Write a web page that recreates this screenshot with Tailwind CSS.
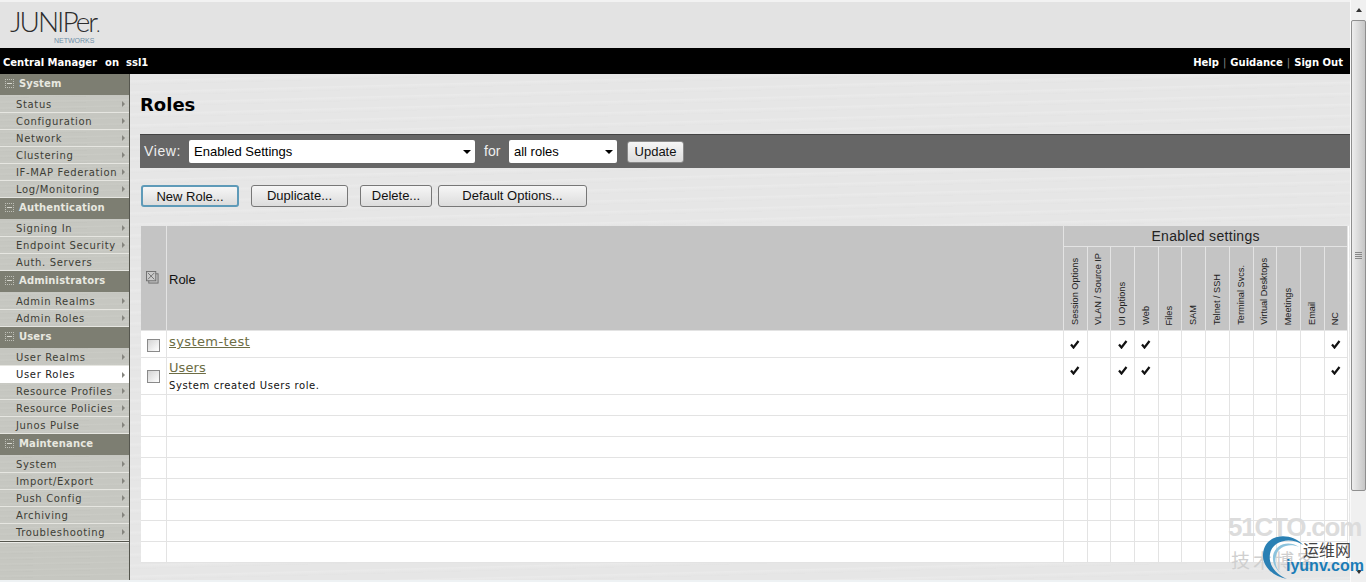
<!doctype html>
<html><head><meta charset="utf-8"><script src="https://cdn.jsdelivr.net/npm/@tailwindcss/browser@4"></script></head>
<body class="w-[1366px] h-[582px] overflow-hidden bg-[#e8ecee] font-['DejaVu_Sans',sans-serif] relative">
<div class="flex h-[582px]">
<div class="w-[1350px] flex flex-col">
  <header class="h-[48px] shrink-0 bg-[#e3e3e3] border-t-2 border-[#f2f2f2] pl-[10px] pt-[7px] flex flex-col items-start">
    <div class="font-['Lato',sans-serif] font-light text-[28px] leading-[24px] text-[#2c2c2c] tracking-[-2px]">JUNIPer<span class="text-[17px]">.</span></div>
    <div class="font-['Liberation_Sans',sans-serif] text-[7px] leading-[8px] ml-[44px] -mt-px text-[#6f8fa8]">NETWORKS</div>
  </header>
  <div class="h-[26px] shrink-0 bg-black text-white text-[10px] font-bold flex items-center justify-between pl-[3px] pr-[7px] pt-[2px]">
    <span class="whitespace-pre">Central Manager  <span class="ml-px">on</span>  <span>ssl1</span></span>
    <span class="flex items-center"><span>Help</span><span class="font-normal text-[#888] mx-[4px]">|</span><span>Guidance</span><span class="font-normal text-[#888] mx-[4px]">|</span><span>Sign Out</span></span>
  </div>
  <div class="flex flex-1 min-h-0">
    <nav class="w-[130px] shrink-0 border-r border-[#55564e] bg-[repeating-linear-gradient(179deg,#c6c7c1_0px,#c6c7c1_3px,#cacbc5_4px,#c3c4be_6px)] text-[10px] tracking-[0.65px] text-[#3d3d35]">
      <div class="h-[21px] mb-px bg-[#7d7e72] text-[#e8e8e0] font-bold tracking-[0.15px] flex items-center pl-[5px] pb-[2px]"><span class="w-[9px] h-[9px] border border-dotted border-[#bfc0b8] mr-[5px] flex items-center justify-center"><span class="w-[5px] h-px bg-[#d8d8d0]"></span></span>System</div>
      <a class="h-[17px] flex items-center justify-between pl-[16px] pr-[4px] border-b border-[#e6e6e1]">Status<span class="w-0 h-0 border-y-[3px] border-y-transparent border-l-[3px] border-l-[#85857f]"></span></a>
      <a class="h-[17px] flex items-center justify-between pl-[16px] pr-[4px] border-b border-[#e6e6e1]">Configuration<span class="w-0 h-0 border-y-[3px] border-y-transparent border-l-[3px] border-l-[#85857f]"></span></a>
      <a class="h-[17px] flex items-center justify-between pl-[16px] pr-[4px] border-b border-[#e6e6e1]">Network<span class="w-0 h-0 border-y-[3px] border-y-transparent border-l-[3px] border-l-[#85857f]"></span></a>
      <a class="h-[17px] flex items-center justify-between pl-[16px] pr-[4px] border-b border-[#e6e6e1]">Clustering<span class="w-0 h-0 border-y-[3px] border-y-transparent border-l-[3px] border-l-[#85857f]"></span></a>
      <a class="h-[17px] flex items-center justify-between pl-[16px] pr-[4px] border-b border-[#e6e6e1]">IF-MAP Federation<span class="w-0 h-0 border-y-[3px] border-y-transparent border-l-[3px] border-l-[#85857f]"></span></a>
      <a class="h-[17px] flex items-center justify-between pl-[16px] pr-[4px] border-b border-[#e6e6e1]">Log/Monitoring<span class="w-0 h-0 border-y-[3px] border-y-transparent border-l-[3px] border-l-[#85857f]"></span></a>

      <div class="h-[21px] mb-px bg-[#7d7e72] text-[#e8e8e0] font-bold tracking-[0.15px] flex items-center pl-[5px] pb-[2px]"><span class="w-[9px] h-[9px] border border-dotted border-[#bfc0b8] mr-[5px] flex items-center justify-center"><span class="w-[5px] h-px bg-[#d8d8d0]"></span></span>Authentication</div>
      <a class="h-[17px] flex items-center justify-between pl-[16px] pr-[4px] border-b border-[#e6e6e1]">Signing In<span class="w-0 h-0 border-y-[3px] border-y-transparent border-l-[3px] border-l-[#85857f]"></span></a>
      <a class="h-[17px] flex items-center justify-between pl-[16px] pr-[4px] border-b border-[#e6e6e1]">Endpoint Security<span class="w-0 h-0 border-y-[3px] border-y-transparent border-l-[3px] border-l-[#85857f]"></span></a>
      <a class="h-[17px] flex items-center justify-between pl-[16px] pr-[4px] border-b border-[#e6e6e1]">Auth. Servers</a>

      <div class="h-[21px] mb-px bg-[#7d7e72] text-[#e8e8e0] font-bold tracking-[0.15px] flex items-center pl-[5px] pb-[2px]"><span class="w-[9px] h-[9px] border border-dotted border-[#bfc0b8] mr-[5px] flex items-center justify-center"><span class="w-[5px] h-px bg-[#d8d8d0]"></span></span>Administrators</div>
      <a class="h-[17px] flex items-center justify-between pl-[16px] pr-[4px] border-b border-[#e6e6e1]">Admin Realms<span class="w-0 h-0 border-y-[3px] border-y-transparent border-l-[3px] border-l-[#85857f]"></span></a>
      <a class="h-[17px] flex items-center justify-between pl-[16px] pr-[4px] border-b border-[#e6e6e1]">Admin Roles<span class="w-0 h-0 border-y-[3px] border-y-transparent border-l-[3px] border-l-[#85857f]"></span></a>

      <div class="h-[21px] mb-px bg-[#7d7e72] text-[#e8e8e0] font-bold tracking-[0.15px] flex items-center pl-[5px] pb-[2px]"><span class="w-[9px] h-[9px] border border-dotted border-[#bfc0b8] mr-[5px] flex items-center justify-center"><span class="w-[5px] h-px bg-[#d8d8d0]"></span></span>Users</div>
      <a class="h-[17px] flex items-center justify-between pl-[16px] pr-[4px] border-b border-[#e6e6e1]">User Realms<span class="w-0 h-0 border-y-[3px] border-y-transparent border-l-[3px] border-l-[#85857f]"></span></a>
      <a class="h-[17px] flex items-center justify-between pl-[16px] pr-[4px] bg-white text-[#222]">User Roles<span class="w-0 h-0 border-y-[3px] border-y-transparent border-l-[3px] border-l-[#85857f]"></span></a>
      <a class="h-[17px] flex items-center justify-between pl-[16px] pr-[4px] border-b border-[#e6e6e1]">Resource Profiles<span class="w-0 h-0 border-y-[3px] border-y-transparent border-l-[3px] border-l-[#85857f]"></span></a>
      <a class="h-[17px] flex items-center justify-between pl-[16px] pr-[4px] border-b border-[#e6e6e1]">Resource Policies<span class="w-0 h-0 border-y-[3px] border-y-transparent border-l-[3px] border-l-[#85857f]"></span></a>
      <a class="h-[17px] flex items-center justify-between pl-[16px] pr-[4px] border-b border-[#e6e6e1]">Junos Pulse<span class="w-0 h-0 border-y-[3px] border-y-transparent border-l-[3px] border-l-[#85857f]"></span></a>

      <div class="h-[21px] mb-px bg-[#7d7e72] text-[#e8e8e0] font-bold tracking-[0.15px] flex items-center pl-[5px] pb-[2px]"><span class="w-[9px] h-[9px] border border-dotted border-[#bfc0b8] mr-[5px] flex items-center justify-center"><span class="w-[5px] h-px bg-[#d8d8d0]"></span></span>Maintenance</div>
      <a class="h-[17px] flex items-center justify-between pl-[16px] pr-[4px] border-b border-[#e6e6e1]">System<span class="w-0 h-0 border-y-[3px] border-y-transparent border-l-[3px] border-l-[#85857f]"></span></a>
      <a class="h-[17px] flex items-center justify-between pl-[16px] pr-[4px] border-b border-[#e6e6e1]">Import/Export<span class="w-0 h-0 border-y-[3px] border-y-transparent border-l-[3px] border-l-[#85857f]"></span></a>
      <a class="h-[17px] flex items-center justify-between pl-[16px] pr-[4px] border-b border-[#e6e6e1]">Push Config<span class="w-0 h-0 border-y-[3px] border-y-transparent border-l-[3px] border-l-[#85857f]"></span></a>
      <a class="h-[17px] flex items-center justify-between pl-[16px] pr-[4px] border-b border-[#e6e6e1]">Archiving<span class="w-0 h-0 border-y-[3px] border-y-transparent border-l-[3px] border-l-[#85857f]"></span></a>
      <a class="h-[17px] flex items-center justify-between pl-[16px] pr-[4px] border-b border-[#e6e6e1]">Troubleshooting<span class="w-0 h-0 border-y-[3px] border-y-transparent border-l-[3px] border-l-[#85857f]"></span></a>
      <div class="h-[2px] bg-[#55564e] border-b border-[#ecece8]"></div>
    </nav>
    <main class="flex-1 min-w-0 bg-[repeating-linear-gradient(178.5deg,#e6e6e6_0px,#e6e6e6_6px,#eaeaea_7px,#e4e4e4_11px)] pl-[10px]">
      <h1 class="text-[18px] leading-[24px] font-bold text-black mt-[19px]">Roles</h1>
      <div class="mt-[17px] h-[34px] bg-[#666666] border-t border-[#444] flex items-center font-['Liberation_Sans',sans-serif] text-[14px] text-[#eeeeee]">
        <span class="ml-[4px] w-[45px] tracking-[0.6px]">View:</span>
        <span class="w-[286px] h-[23px] bg-white rounded-[2px] flex items-center justify-between pl-[5px] pr-[4px] pt-[1px] text-[13px] text-black">Enabled Settings<span class="w-0 h-0 border-x-[4px] border-x-transparent border-t-[4px] border-t-black"></span></span>
        <span class="ml-[9px] w-[25px]">for</span>
        <span class="w-[108px] h-[23px] bg-white rounded-[2px] flex items-center justify-between pl-[5px] pr-[4px] pt-[1px] text-[13px] text-black">all roles<span class="w-0 h-0 border-x-[4px] border-x-transparent border-t-[4px] border-t-black"></span></span>
        <button class="ml-[10px] w-[57px] h-[22px] rounded-[3px] border border-[#8a8a8a] bg-[linear-gradient(#f6f6f6,#dcdcdc)] text-[#111] text-[13px]">Update</button>
      </div>
      <div class="mt-[17px] ml-px h-[22px] flex font-['Liberation_Sans',sans-serif] text-[13px] text-[#111]">
        <button class="w-[98px] rounded-[3px] border-2 border-[#5e9ab8] bg-[linear-gradient(#f6f6f6,#dcdcdc)] pb-px">New Role...</button>
        <button class="ml-[12px] w-[97px] rounded-[3px] border border-[#777] bg-[linear-gradient(#f6f6f6,#dcdcdc)] pb-px">Duplicate...</button>
        <button class="ml-[12px] w-[72px] rounded-[3px] border border-[#777] bg-[linear-gradient(#f6f6f6,#dcdcdc)] pb-px">Delete...</button>
        <button class="ml-[6px] w-[149px] rounded-[3px] border border-[#777] bg-[linear-gradient(#f6f6f6,#dcdcdc)] pb-px">Default Options...</button>
      </div>
      <div class="mt-[19px] ml-px w-[1208px] grid grid-cols-[26px_897px_repeat(12,23.7px)] grid-rows-[21px_84px_27px_37px_repeat(8,21px)] font-['Liberation_Sans',sans-serif] bg-white *:border-r *:border-b *:border-[#e3e3e3]">
        <div class="row-span-2 bg-[#c4c4c4] flex items-center justify-center pb-[2px] pr-[3px]"><svg width="13" height="13" viewBox="0 0 14 14" fill="none" stroke="#6f6f6f"><rect x="3" y="3" width="10" height="10" fill="#bcbcbc"/><rect x="0.5" y="0.5" width="10" height="10" fill="#c9c9c9"/><path d="M2 2l7 7M9 2l-7 7"/></svg></div>
        <div class="row-span-2 bg-[#c4c4c4] flex items-center pl-[2px] pt-[4px] text-[13px] text-[#111]">Role</div>
        <div class="col-span-12 bg-[#c4c4c4] flex items-center justify-center pt-px text-[14px] tracking-[0.3px] text-[#222]">Enabled settings</div>

        <div class="bg-[#c4c4c4] flex items-end justify-center pb-[5px] text-[9.2px] text-[#222] leading-none"><span class="[writing-mode:vertical-rl] rotate-180 whitespace-nowrap">Session Options</span></div>
        <div class="bg-[#c4c4c4] flex items-end justify-center pb-[5px] text-[9.2px] text-[#222] leading-none"><span class="[writing-mode:vertical-rl] rotate-180 whitespace-nowrap">VLAN / Source IP</span></div>
        <div class="bg-[#c4c4c4] flex items-end justify-center pb-[5px] text-[9.2px] text-[#222] leading-none"><span class="[writing-mode:vertical-rl] rotate-180 whitespace-nowrap">UI Options</span></div>
        <div class="bg-[#c4c4c4] flex items-end justify-center pb-[5px] text-[9.2px] text-[#222] leading-none"><span class="[writing-mode:vertical-rl] rotate-180 whitespace-nowrap">Web</span></div>
        <div class="bg-[#c4c4c4] flex items-end justify-center pb-[5px] text-[9.2px] text-[#222] leading-none"><span class="[writing-mode:vertical-rl] rotate-180 whitespace-nowrap">Files</span></div>
        <div class="bg-[#c4c4c4] flex items-end justify-center pb-[5px] text-[9.2px] text-[#222] leading-none"><span class="[writing-mode:vertical-rl] rotate-180 whitespace-nowrap">SAM</span></div>
        <div class="bg-[#c4c4c4] flex items-end justify-center pb-[5px] text-[9.2px] text-[#222] leading-none"><span class="[writing-mode:vertical-rl] rotate-180 whitespace-nowrap">Telnet / SSH</span></div>
        <div class="bg-[#c4c4c4] flex items-end justify-center pb-[5px] text-[9.2px] text-[#222] leading-none"><span class="[writing-mode:vertical-rl] rotate-180 whitespace-nowrap">Terminal Svcs.</span></div>
        <div class="bg-[#c4c4c4] flex items-end justify-center pb-[5px] text-[9.2px] text-[#222] leading-none"><span class="[writing-mode:vertical-rl] rotate-180 whitespace-nowrap">Virtual Desktops</span></div>
        <div class="bg-[#c4c4c4] flex items-end justify-center pb-[5px] text-[9.2px] text-[#222] leading-none"><span class="[writing-mode:vertical-rl] rotate-180 whitespace-nowrap">Meetings</span></div>
        <div class="bg-[#c4c4c4] flex items-end justify-center pb-[5px] text-[9.2px] text-[#222] leading-none"><span class="[writing-mode:vertical-rl] rotate-180 whitespace-nowrap">Email</span></div>
        <div class="bg-[#c4c4c4] flex items-end justify-center pb-[5px] text-[9.2px] text-[#222] leading-none"><span class="[writing-mode:vertical-rl] rotate-180 whitespace-nowrap">NC</span></div>

        <div class="flex justify-center pt-[8px]"><input type="checkbox" class="appearance-none w-[13px] h-[13px] border border-[#8a8a8a] bg-[linear-gradient(135deg,#d4d4d4,#fff)]"></div>
        <div class="pl-[2px] pt-[2px] font-['DejaVu_Sans',sans-serif]"><a class="block text-[13px] leading-[18px] tracking-[0.4px] text-[#6d6d45] underline">system-test</a></div>
        <div class="flex justify-center pt-[9px]"><svg width="10" height="9" viewBox="0 0 10 9"><path d="M1 4.5l2.5 3L8.5 1" fill="none" stroke="#111" stroke-width="2.2"/></svg></div>
        <div></div>
        <div class="flex justify-center pt-[9px]"><svg width="10" height="9" viewBox="0 0 10 9"><path d="M1 4.5l2.5 3L8.5 1" fill="none" stroke="#111" stroke-width="2.2"/></svg></div>
        <div class="flex justify-center pt-[9px]"><svg width="10" height="9" viewBox="0 0 10 9"><path d="M1 4.5l2.5 3L8.5 1" fill="none" stroke="#111" stroke-width="2.2"/></svg></div>
        <div></div><div></div><div></div><div></div><div></div><div></div><div></div>
        <div class="flex justify-center pt-[9px]"><svg width="10" height="9" viewBox="0 0 10 9"><path d="M1 4.5l2.5 3L8.5 1" fill="none" stroke="#111" stroke-width="2.2"/></svg></div>

        <div class="flex justify-center pt-[12px]"><input type="checkbox" class="appearance-none w-[13px] h-[13px] border border-[#8a8a8a] bg-[linear-gradient(135deg,#d4d4d4,#fff)]"></div>
        <div class="pl-[2px] pt-[1px] font-['DejaVu_Sans',sans-serif]"><a class="block text-[13px] leading-[18px] tracking-[0.1px] text-[#6d6d45] underline">Users</a><p class="text-[10px] leading-[14px] tracking-[0.6px] text-[#111] mt-[2px]">System created Users role.</p></div>
        <div class="flex justify-center pt-[8px]"><svg width="10" height="9" viewBox="0 0 10 9"><path d="M1 4.5l2.5 3L8.5 1" fill="none" stroke="#111" stroke-width="2.2"/></svg></div>
        <div></div>
        <div class="flex justify-center pt-[8px]"><svg width="10" height="9" viewBox="0 0 10 9"><path d="M1 4.5l2.5 3L8.5 1" fill="none" stroke="#111" stroke-width="2.2"/></svg></div>
        <div class="flex justify-center pt-[8px]"><svg width="10" height="9" viewBox="0 0 10 9"><path d="M1 4.5l2.5 3L8.5 1" fill="none" stroke="#111" stroke-width="2.2"/></svg></div>
        <div></div><div></div><div></div><div></div><div></div><div></div><div></div>
        <div class="flex justify-center pt-[8px]"><svg width="10" height="9" viewBox="0 0 10 9"><path d="M1 4.5l2.5 3L8.5 1" fill="none" stroke="#111" stroke-width="2.2"/></svg></div>

        <div></div><div></div><div></div><div></div><div></div><div></div><div></div><div></div><div></div><div></div><div></div><div></div><div></div><div></div>
        <div></div><div></div><div></div><div></div><div></div><div></div><div></div><div></div><div></div><div></div><div></div><div></div><div></div><div></div>
        <div></div><div></div><div></div><div></div><div></div><div></div><div></div><div></div><div></div><div></div><div></div><div></div><div></div><div></div>
        <div></div><div></div><div></div><div></div><div></div><div></div><div></div><div></div><div></div><div></div><div></div><div></div><div></div><div></div>
        <div></div><div></div><div></div><div></div><div></div><div></div><div></div><div></div><div></div><div></div><div></div><div></div><div></div><div></div>
        <div></div><div></div><div></div><div></div><div></div><div></div><div></div><div></div><div></div><div></div><div></div><div></div><div></div><div></div>
        <div></div><div></div><div></div><div></div><div></div><div></div><div></div><div></div><div></div><div></div><div></div><div></div><div></div><div></div>
        <div></div><div></div><div></div><div></div><div></div><div></div><div></div><div></div><div></div><div></div><div></div><div></div><div></div><div></div>
      </div>
    </main>
  </div>
  <div class="h-[2px] shrink-0 bg-[#eef2f4]"></div>
</div>
<div class="w-[16px] flex flex-col items-center bg-[#f0f0f0] border-l border-[#fafafa]">
  <div class="h-[20px] w-full flex items-center justify-center"><span class="w-0 h-0 border-x-[3px] border-x-transparent border-b-[4px] border-b-[#333]"></span></div>
  <div class="h-[471px] w-full rounded-[2px] border border-[#8f8f8f] bg-[linear-gradient(90deg,#eeeeee,#c6c6c6)] flex flex-col items-center justify-center gap-px">
    <span class="w-[7px] h-px bg-[#888]"></span><span class="w-[7px] h-px bg-[#888]"></span><span class="w-[7px] h-px bg-[#888]"></span><span class="w-[7px] h-px bg-[#888]"></span>
  </div>
  <div class="flex-1"></div>
  <div class="h-[20px] w-full flex items-center justify-center"><span class="w-0 h-0 border-x-[3px] border-x-transparent border-t-[4px] border-t-[#333]"></span></div>
</div>
</div>

<div class="absolute left-[1228px] top-[511px] font-['Liberation_Sans',sans-serif] font-bold text-[26px] leading-[32px] tracking-[-1.2px] text-[#dcdcdc] whitespace-nowrap">51CTO.com</div>
<div class="absolute left-[1231px] top-[548px] font-['Noto_Sans_CJK_SC',sans-serif] text-[19px] leading-[24px] tracking-[3px] text-[#cfcfcf] whitespace-nowrap">技术博客</div>
<svg class="absolute left-[1262px] top-[534px]" width="50" height="48" viewBox="0 0 50 48"><path d="M41 11C30-2 3-2 1 20C0 33 12 43 25 45C14 40 6 31 8 20C10 7 28 2 41 11Z" fill="#2a80b4"/><path d="M37 13C27 6 13 10 11 22C10 30 15 37 21 41C15 37 12 29 14 22C16 12 28 9 37 13Z" fill="#8cc3dd"/></svg>
<div class="absolute left-[1303px] top-[539px] font-['Noto_Sans_CJK_SC',sans-serif] text-[16px] leading-[20px] text-[#444] whitespace-nowrap">运维网</div>
<div class="absolute left-[1286px] top-[556px] font-['Liberation_Sans',sans-serif] font-bold text-[16px] leading-[20px] text-[#1b7db8] whitespace-nowrap">iyunv.com</div>
</body></html>
